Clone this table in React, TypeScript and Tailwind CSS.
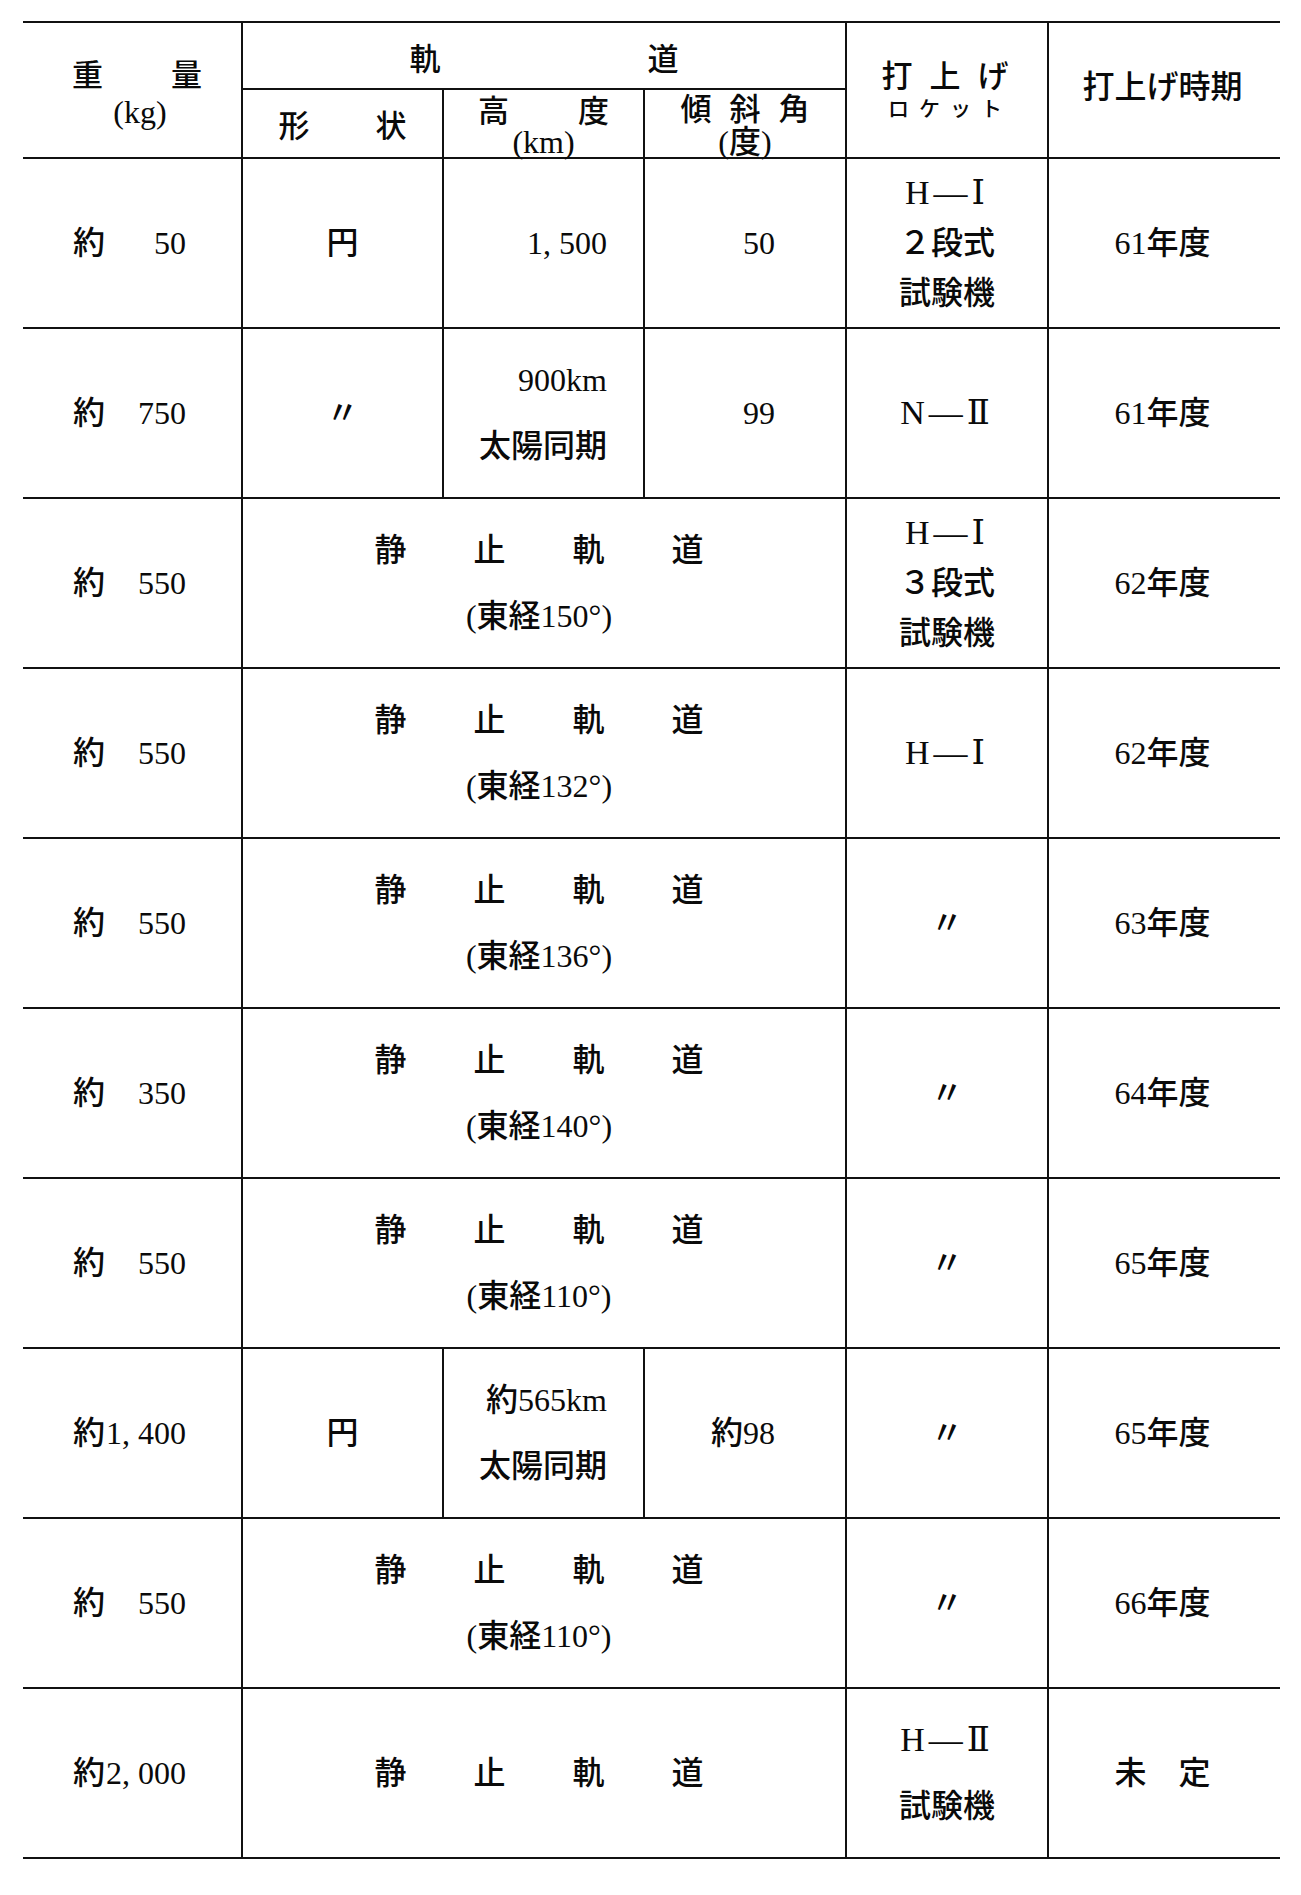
import React from 'react';

type Row = {
    weight: string;
    shape?: string;
    altitude?: string[];
    incline?: string;
    geo?: string | null;
    rocket: string[];
    date: string;
};

const rows: Row[] = [
    { weight: '50', shape: '円', altitude: ['1,500'], incline: '50', rocket: ['H—Ⅰ', '２段式', '試験機'], date: '61年度' },
    { weight: '750', shape: '〃', altitude: ['900km', '太陽同期'], incline: '99', rocket: ['N—Ⅱ'], date: '61年度' },
    { weight: '550', geo: '(東経150°)', rocket: ['H—Ⅰ', '３段式', '試験機'], date: '62年度' },
    { weight: '550', geo: '(東経132°)', rocket: ['H—Ⅰ'], date: '62年度' },
    { weight: '550', geo: '(東経136°)', rocket: ['〃'], date: '63年度' },
    { weight: '350', geo: '(東経140°)', rocket: ['〃'], date: '64年度' },
    { weight: '550', geo: '(東経110°)', rocket: ['〃'], date: '65年度' },
    { weight: '1,400', shape: '円', altitude: ['約565km', '太陽同期'], incline: '約98', rocket: ['〃'], date: '65年度' },
    { weight: '550', geo: '(東経110°)', rocket: ['〃'], date: '66年度' },
    { weight: '2,000', geo: null, rocket: ['H—Ⅱ', '試験機'], date: '未　定' },
];

const cell = 'border-b-2 border-[#111] flex';
const divided = 'border-l-2';

// numbers are set with a wide comma ("1, 500")
const Num: React.FC<{ value: string }> = ({ value }) => {
    const parts = value.split(',');
    if (parts.length === 1) return <span>{value}</span>;
    return (
        <span>
            {parts[0]}<span className="mr-[8px]">,</span>{parts[1]}
        </span>
    );
};

// 「H—Ⅰ」 style rocket names get a slightly larger serif face
const RocketLine: React.FC<{ text: string }> = ({ text }) => {
    if (/^[HN]—/.test(text)) {
        return <span className="text-[34px] tracking-[4px]">{text}</span>;
    }
    return <span>{text}</span>;
};

const Spread: React.FC<{ chars: string[]; gap: string }> = ({ chars, gap }) => (
    <div className={`flex ${gap}`}>
        {chars.map((c, i) => <span key={i}>{c}</span>)}
    </div>
);

export default function App() {
    return (
        <div className="min-h-[1895px] bg-white pt-[21px] pl-[23px] font-medium text-[#0a0a0a] font-['Liberation_Serif','DejaVu_Serif','Noto_Sans_CJK_JP',serif]">
            <div className="grid w-[1257px] grid-cols-[218px_201px_201px_202px_202px_233px] grid-rows-[67px_69px_repeat(10,170px)] border-t-2 border-[#111] text-[32px]">
                {/* header */}
                <div className={`${cell} row-span-2 flex-col items-center justify-center pl-[10px] pt-[8px]`}>
                    <div className="text-[31px] leading-[36px]"><Spread chars={['重', '量']} gap="gap-[68px]" /></div>
                    <div className="ml-[6px] leading-[36px]">(kg)</div>
                </div>
                <div className={`${cell} ${divided} col-span-3 items-center justify-center pt-[9px] text-[31px]`}>
                    <Spread chars={['軌', '道']} gap="gap-[207px]" />
                </div>
                <div className={`${cell} ${divided} row-span-2 flex-col items-center justify-center pt-[6px] pr-[4px]`}>
                    <div className="text-[31px] leading-[32px]"><Spread chars={['打', '上', 'げ']} gap="gap-[17px]" /></div>
                    <div className="text-[21px] leading-[32px] tracking-[10px] pl-[10px]">ロケット</div>
                </div>
                <div className={`${cell} ${divided} row-span-2 items-center justify-center pb-[6px] pr-[4px]`}>
                    打上げ時期
                </div>
                <div className={`${cell} ${divided} items-center justify-center pt-[8px] text-[31px]`}>
                    <Spread chars={['形', '状']} gap="gap-[66px]" />
                </div>
                <div className={`${cell} ${divided} flex-col items-center justify-center pt-[6px]`}>
                    <div className="text-[31px] leading-[31px]"><Spread chars={['高', '度']} gap="gap-[69px]" /></div>
                    <div className="leading-[31px]">(km)</div>
                </div>
                <div className={`${cell} ${divided} flex-col items-center justify-center pt-[4px]`}>
                    <div className="text-[31px] leading-[32px]"><Spread chars={['傾', '斜', '角']} gap="gap-[18px]" /></div>
                    <div className="leading-[32px]">(度)</div>
                </div>

                {/* body */}
                {rows.map((r, i) => (
                    <React.Fragment key={i}>
                        <div className={`${cell} items-center pl-[50px]`}>
                            <div className="flex w-[113px] justify-between">
                                <span>約</span>
                                <Num value={r.weight} />
                            </div>
                        </div>
                        {r.geo !== undefined ? (
                            <div className={`${cell} ${divided} col-span-3 flex-col items-center justify-center pr-[10px] leading-[66px]`}>
                                <Spread chars={['静', '止', '軌', '道']} gap="gap-[67px]" />
                                {r.geo && <div>{r.geo}</div>}
                            </div>
                        ) : (
                            <>
                                <div className={`${cell} ${divided} items-center justify-center`}>{r.shape}</div>
                                <div className={`${cell} ${divided} flex-col items-end justify-center pr-[36px] leading-[66px]`}>
                                    {r.altitude?.map((a, j) => <div key={j}><Num value={a} /></div>)}
                                </div>
                                <div className={`${cell} ${divided} items-center justify-end pr-[70px]`}>{r.incline}</div>
                            </>
                        )}
                        <div className={`${cell} ${divided} flex-col items-center justify-center ${r.rocket.length === 3 ? 'leading-[50px]' : 'leading-[66px]'}`}>
                            {r.rocket.map((t, j) => <RocketLine key={j} text={t} />)}
                        </div>
                        <div className={`${cell} ${divided} items-center justify-center pr-[4px]`}>{r.date}</div>
                    </React.Fragment>
                ))}
            </div>
        </div>
    );
}
